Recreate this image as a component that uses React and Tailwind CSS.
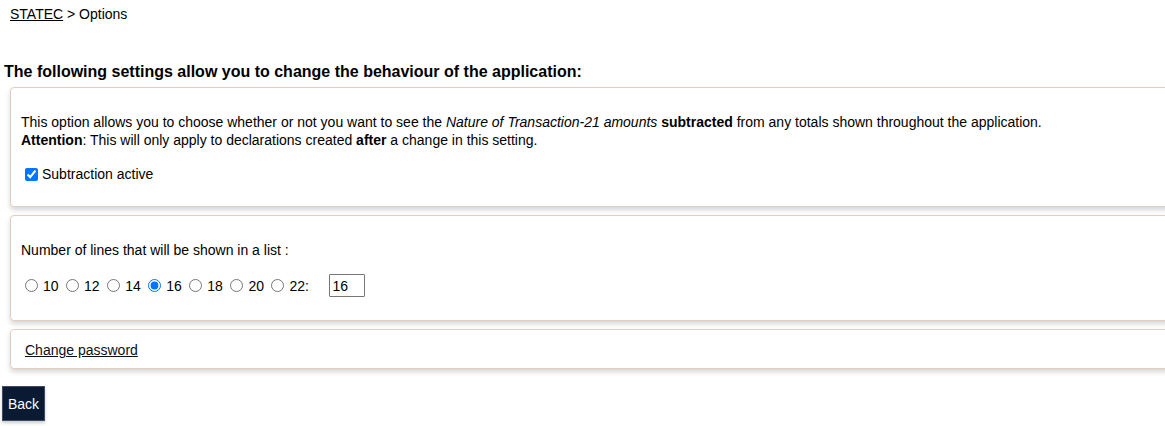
import React from "react";

const Panel = ({ className = "", children }) => (
  <div
    className={`ml-[10px] w-[1170px] rounded-[4px] border border-[#e2cfc3] bg-white shadow-[0_3px_5px_rgba(0,0,0,0.16)] pl-[10px] ${className}`}
  >
    {children}
  </div>
);

const App = () => {
  const sizes = ["10", "12", "14", "16", "18", "20", "22:"];

  return (
    <div className="w-[1165px] h-[426px] overflow-hidden bg-white text-black text-[14px] leading-[18px] font-['Liberation_Sans',Arial,sans-serif]">
      {/* Breadcrumb */}
      <div className="pt-[5px] pl-[10px]">
        <a href="#" className="underline text-black">STATEC</a> &gt; Options
      </div>

      <h1 className="mt-[40px] pl-[4px] text-[16px] leading-[18px] font-bold">
        The following settings allow you to change the behaviour of the application:
      </h1>

      <div className="mt-[6px] flex flex-col gap-[8px]">
        {/* Subtraction option */}
        <Panel className="h-[120px] pt-[25px]">
          <p>
            This option allows you to choose whether or not you want to see the{" "}
            <i>Nature of Transaction-21 amounts</i> <b>subtracted</b> from any totals shown
            throughout the application.
            <br />
            <b>Attention</b>: This will only apply to declarations created <b>after</b> a change
            in this setting.
          </p>
          <label className="mt-[16px] flex items-center">
            <input
              type="checkbox"
              defaultChecked
              className="m-0 ml-[4px] mr-[4px] w-[13px] h-[13px] accent-[#0075ff]"
            />
            Subtraction active
          </label>
        </Panel>

        {/* Lines per list */}
        <Panel className="h-[106px] pt-[25px]">
          <p>Number of lines that will be shown in a list :</p>
          <div className="mt-[15px] flex items-center pl-[4px] gap-[7.5px]">
            {sizes.map((s) => (
              <label key={s} className="flex items-center">
                <input
                  type="radio"
                  name="lines"
                  defaultChecked={s === "16"}
                  className="m-0 mr-[5px] w-[13px] h-[13px] accent-[#0075ff]"
                />
                {s}
              </label>
            ))}
            <input
              type="text"
              defaultValue="16"
              className="ml-[13px] w-[36px] h-[23px] border border-[#767676] rounded-[1px] px-[2px] text-[14px]"
            />
          </div>
        </Panel>

        {/* Password */}
        <Panel className="h-[40px] pt-[11px]">
          <a href="#" className="ml-[4px] underline text-[#0b1020]">Change password</a>
        </Panel>
      </div>

      <button className="mt-[17px] ml-[2px] h-[35px] w-[43px] border border-[#3f4d63] bg-[#0a1a33] text-white text-[14px] shadow-[0_2px_3px_rgba(0,0,0,0.2)]">
        Back
      </button>
    </div>
  );
};

export default App;
